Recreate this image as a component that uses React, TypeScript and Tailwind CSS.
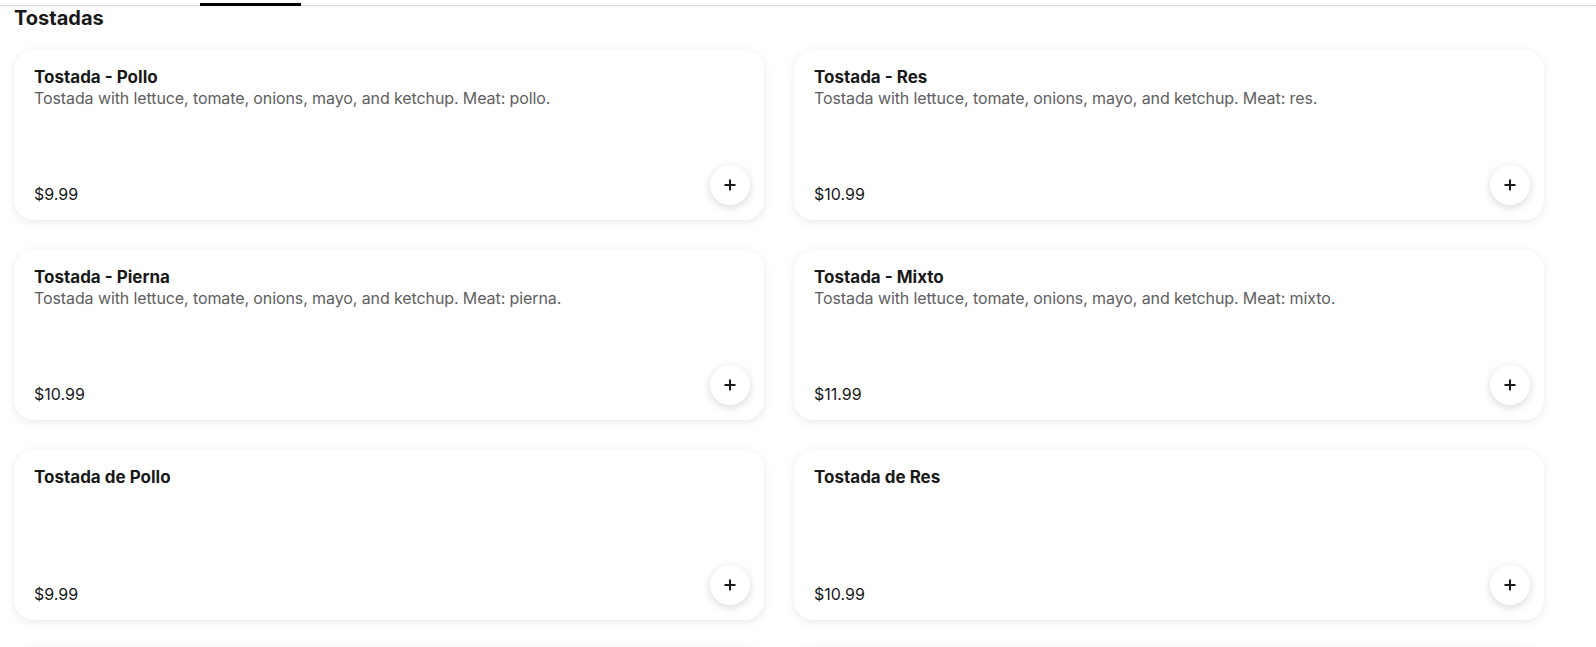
import React from 'react';

type Item = {
  name: string;
  description?: string;
  price: string;
};

const ITEMS: Item[] = [
  {
    name: 'Tostada - Pollo',
    description: 'Tostada with lettuce, tomate, onions, mayo, and ketchup. Meat: pollo.',
    price: '$9.99',
  },
  {
    name: 'Tostada - Res',
    description: 'Tostada with lettuce, tomate, onions, mayo, and ketchup. Meat: res.',
    price: '$10.99',
  },
  {
    name: 'Tostada - Pierna',
    description: 'Tostada with lettuce, tomate, onions, mayo, and ketchup. Meat: pierna.',
    price: '$10.99',
  },
  {
    name: 'Tostada - Mixto',
    description: 'Tostada with lettuce, tomate, onions, mayo, and ketchup. Meat: mixto.',
    price: '$11.99',
  },
  { name: 'Tostada de Pollo', price: '$9.99' },
  { name: 'Tostada de Res', price: '$10.99' },
];

function PlusIcon() {
  return (
    <svg width="12" height="12" viewBox="0 0 12 12" fill="none">
      <path d="M6 0.5v11M0.5 6h11" stroke="#191919" strokeWidth="2" />
    </svg>
  );
}

function MenuCard({ item }: { item: Item }) {
  return (
    <div className="h-[170px] rounded-[20px] bg-white shadow-[0_2px_10px_rgba(0,0,0,0.09)] flex flex-col justify-between pl-5 pr-[14px] pt-[17px] pb-[15px]">
      <div>
        <h3 className="text-[17px] leading-5 font-bold text-[#191919]">{item.name}</h3>
        {item.description && (
          <p className="text-[16px] leading-[22px] tracking-[-0.1px] text-[#606060]">{item.description}</p>
        )}
      </div>
      <div className="flex items-end justify-between">
        <span className="text-[16px] leading-5 text-[#191919] pb-[1px]">{item.price}</span>
        <button className="w-10 h-10 rounded-full bg-white flex items-center justify-center shadow-[0_2px_8px_rgba(0,0,0,0.16)]">
          <PlusIcon />
        </button>
      </div>
    </div>
  );
}

export default function App() {
  return (
    <div
      className="h-[647px] overflow-hidden bg-white"
      style={{ fontFamily: 'Inter, "Noto Sans", sans-serif' }}
    >
      {/* tab bar, scrolled mostly out of view */}
      <div className="h-[6px] border-b border-[#d9d9d9] shadow-[0_1px_3px_rgba(0,0,0,0.06)] flex">
        <div className="ml-[200px] mt-[3px] w-[101px] h-[3px] bg-black" />
      </div>

      <h2 className="px-[14px] text-[20px] leading-6 font-bold text-[#191919]">Tostadas</h2>

      <div className="mt-5 pl-[14px] grid grid-cols-[750px_750px] gap-x-[30px] gap-y-[30px]">
        {ITEMS.map((item) => (
          <MenuCard key={item.name} item={item} />
        ))}
        {/* next row, only its top edge peeks in */}
        <div className="h-[170px] rounded-[20px] bg-white shadow-[0_-1px_10px_rgba(0,0,0,0.09)]" />
        <div className="h-[170px] rounded-[20px] bg-white shadow-[0_-1px_10px_rgba(0,0,0,0.09)]" />
      </div>
    </div>
  );
}
